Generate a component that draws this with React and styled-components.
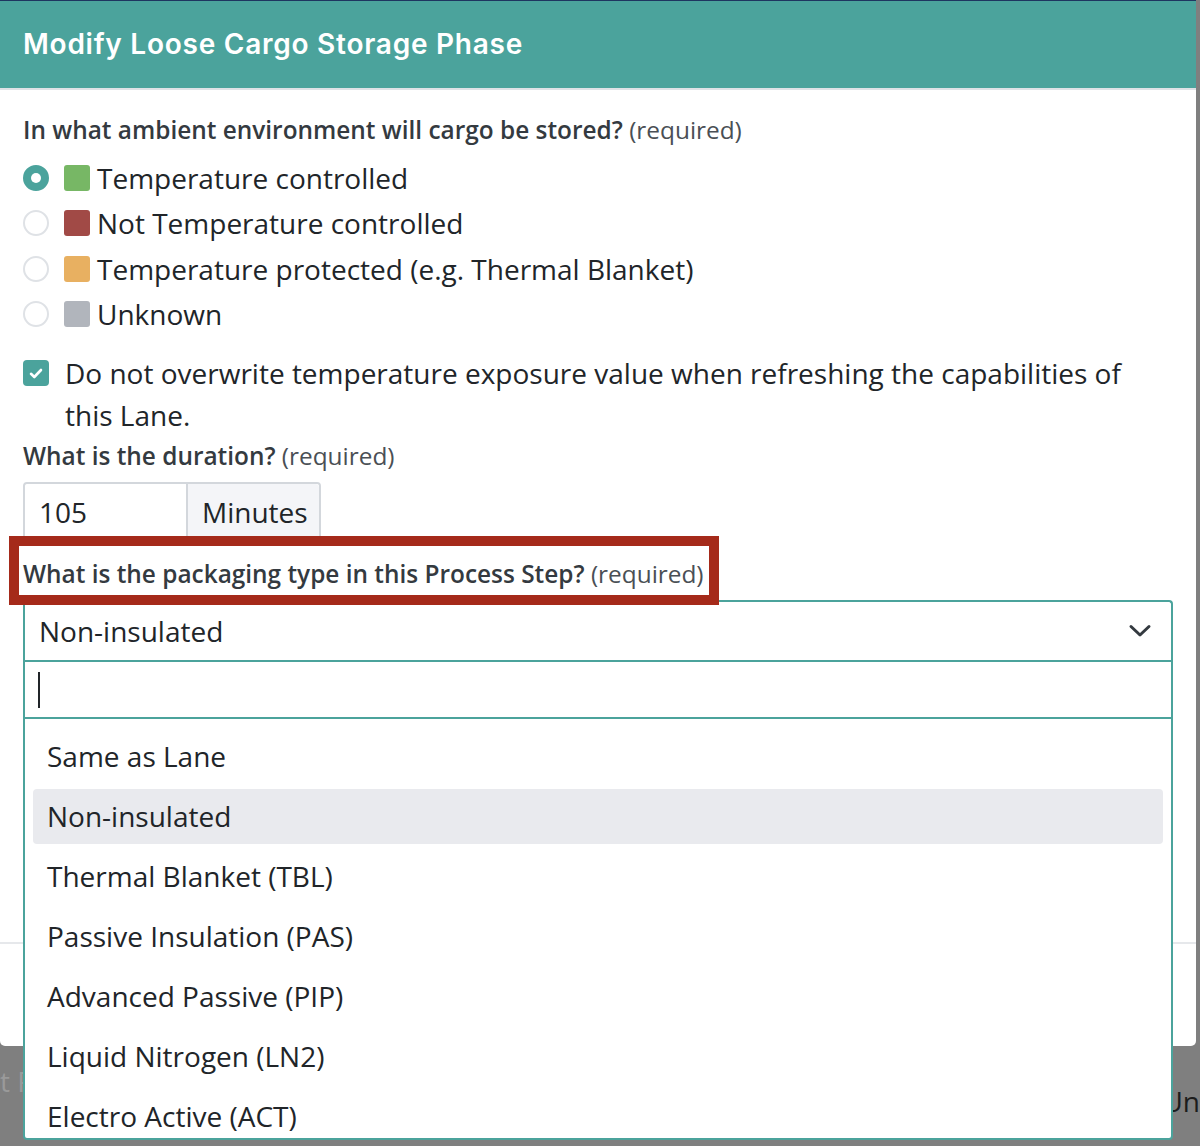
import React from 'react';
import styled, { createGlobalStyle } from 'styled-components';

const teal = '#4ba39c';

const GlobalStyle = createGlobalStyle`
  html, body {
    margin: 0;
    padding: 0;
    background: #7f7f7f;
  }
  body {
    font-family: 'Open Sans', 'Noto Sans', sans-serif;
    color: #212529;
  }
  * {
    box-sizing: border-box;
  }
`;

const StyledPage = styled.div`
  width: 1200px;
  height: 1146px;
  overflow: hidden;
  background: #7f7f7f;
`;

const StyledModal = styled.div`
  width: 1196px;
  background: #fff;
  border-top: 1px solid #1e3560;
  border-radius: 0 0 5px 5px;
`;

const StyledHeader = styled.header`
  height: 89px;
  background: ${teal};
  border-bottom: 2px solid #dee2e6;
  padding: 0 23px;
  display: flex;
  align-items: center;
`;

const StyledTitle = styled.h5`
  margin: 0 0 2px;
  font-family: 'Inter', 'Open Sans', sans-serif;
  font-weight: 600;
  font-size: 28px;
  letter-spacing: 0.75px;
  color: #fff;
`;

const StyledBody = styled.div`
  min-height: 852px;
  padding: 23px 23px 0;
`;

const StyledQuestion = styled.label`
  display: inline-block;
  position: relative;
  z-index: ${({ $flagged }) => ($flagged ? 10 : 'auto')};
  margin-top: ${({ $gap }) => $gap || 0}px;
  font-size: 24.4px;
  line-height: 33px;
  font-weight: 600;
  color: #343a40;
  span {
    font-weight: 400;
    color: #4a4f55;
  }
  &::before {
    content: '';
    display: ${({ $flagged }) => ($flagged ? 'block' : 'none')};
    position: absolute;
    top: -21px;
    left: -14px;
    right: -15px;
    bottom: -15px;
    border: 10px solid #a52a1a;
    background: #fff;
    z-index: -1;
  }
`;

const StyledRadioList = styled.div`
  margin-top: 9px;
  display: flex;
  flex-direction: column;
`;

const StyledRadioRow = styled.div`
  height: 45.5px;
  display: flex;
  align-items: center;
  font-size: 28px;
  color: #212529;
`;

const StyledRadio = styled.span`
  width: 26px;
  height: 26px;
  border-radius: 50%;
  border: 2px solid ${({ $checked }) => ($checked ? teal : '#dfe2e6')};
  background: ${({ $checked }) => ($checked ? teal : '#fff')};
  display: flex;
  align-items: center;
  justify-content: center;
  flex-shrink: 0;
  &::after {
    content: '';
    display: ${({ $checked }) => ($checked ? 'block' : 'none')};
    width: 10px;
    height: 10px;
    border-radius: 50%;
    background: #fff;
  }
`;

const StyledSwatch = styled.span`
  width: 26px;
  height: 26px;
  border-radius: 3px;
  background: ${({ $color }) => $color};
  margin: 0 7px 0 15px;
  flex-shrink: 0;
`;

const StyledCheckRow = styled.div`
  margin-top: 16px;
  display: flex;
  align-items: flex-start;
  gap: 16px;
  font-size: 28px;
  line-height: 41.5px;
  color: #212529;
`;

const StyledCheckbox = styled.span`
  width: 26px;
  height: 26px;
  margin-top: 7px;
  border-radius: 4px;
  background: ${teal};
  display: flex;
  align-items: center;
  justify-content: center;
  flex-shrink: 0;
`;

const StyledInputGroup = styled.div`
  margin-top: 10px;
  display: flex;
  width: 298px;
  height: 60px;
  border: 2px solid #d3d7dc;
  border-radius: 4px;
  font-size: 28px;
  color: #212529;
`;

const StyledInput = styled.div`
  width: 161px;
  padding-left: 14px;
  display: flex;
  align-items: center;
  background: #fff;
  border-radius: 4px 0 0 4px;
`;

const StyledAddon = styled.div`
  flex: 1;
  padding-left: 14px;
  display: flex;
  align-items: center;
  background: #f4f5f8;
  border-left: 2px solid #d3d7dc;
  border-radius: 0 4px 4px 0;
`;

const StyledSelect = styled.div`
  position: relative;
  margin-top: 10px;
  z-index: 5;
`;

const StyledControl = styled.div`
  height: 60px;
  border: 2px solid ${teal};
  border-bottom: none;
  border-radius: 4px 4px 0 0;
  padding: 0 19px 0 14px;
  display: flex;
  align-items: center;
  justify-content: space-between;
  font-size: 28px;
  color: #212529;
  background: #fff;
`;

const StyledMenu = styled.div`
  position: absolute;
  top: 100%;
  left: 0;
  right: 0;
  border: 2px solid ${teal};
  border-radius: 0 0 4px 4px;
  background: #fff;
`;

const StyledSearch = styled.div`
  height: 57px;
  border-bottom: 2px solid ${teal};
  padding-left: 13px;
  display: flex;
  align-items: center;
  &::before {
    content: '';
    width: 2px;
    height: 36px;
    background: #212529;
  }
`;

const StyledOptions = styled.ul`
  list-style: none;
  margin: 0;
  height: 419px;
  overflow: hidden;
  padding: 9.5px 8px 0;
  display: flex;
  flex-direction: column;
  gap: 5px;
`;

const StyledOption = styled.li`
  height: 55px;
  flex-shrink: 0;
  padding-left: 14px;
  display: flex;
  align-items: center;
  border-radius: 4px;
  font-size: 28px;
  color: #212529;
  background: ${({ $active }) => ($active ? '#e9eaee' : 'transparent')};
`;

const StyledFooter = styled.footer`
  height: 104px;
  border-top: 2px solid #e6e8eb;
`;

const StyledBehind = styled.div`
  height: 100px;
  display: flex;
  justify-content: space-between;
  font-size: 28px;
`;

const StyledBehindText = styled.span`
  margin-top: ${({ $top }) => $top}px;
  color: ${({ $dim }) => ($dim ? '#9a9a9a' : '#1c1c1c')};
`;

const environments = [
  { label: 'Temperature controlled', color: '#77b765', checked: true },
  { label: 'Not Temperature controlled', color: '#a14a46' },
  { label: 'Temperature protected (e.g. Thermal Blanket)', color: '#e8b061' },
  { label: 'Unknown', color: '#b1b5bc' },
];

const packagingTypes = [
  'Same as Lane',
  'Non-insulated',
  'Thermal Blanket (TBL)',
  'Passive Insulation (PAS)',
  'Advanced Passive (PIP)',
  'Liquid Nitrogen (LN2)',
  'Electro Active (ACT)',
];

const Chevron = () => (
  <svg width="24" height="14" viewBox="0 0 24 14" fill="none">
    <path d="M3 2.5 L12 11 L21 2.5" stroke="#343a40" strokeWidth="3" strokeLinecap="round" strokeLinejoin="round" />
  </svg>
);

const Check = () => (
  <svg width="14" height="11" viewBox="0 0 14 11" fill="none">
    <path d="M2 5.8 L5.3 9 L12 2" stroke="#fff" strokeWidth="2.6" strokeLinecap="round" strokeLinejoin="round" />
  </svg>
);

const App = () => {
  return (
    <StyledPage>
      <GlobalStyle />
      <StyledModal>
        <StyledHeader>
          <StyledTitle>Modify Loose Cargo Storage Phase</StyledTitle>
        </StyledHeader>
        <StyledBody>
          <StyledQuestion>
            In what ambient environment will cargo be stored? <span>(required)</span>
          </StyledQuestion>
          <StyledRadioList>
            {environments.map(({ label, color, checked }) => (
              <StyledRadioRow key={label}>
                <StyledRadio $checked={checked} />
                <StyledSwatch $color={color} />
                {label}
              </StyledRadioRow>
            ))}
          </StyledRadioList>
          <StyledCheckRow>
            <StyledCheckbox>
              <Check />
            </StyledCheckbox>
            <div>Do not overwrite temperature exposure value when refreshing the capabilities of this Lane.</div>
          </StyledCheckRow>
          <StyledQuestion $gap={3}>
            What is the duration? <span>(required)</span>
          </StyledQuestion>
          <StyledInputGroup>
            <StyledInput>105</StyledInput>
            <StyledAddon>Minutes</StyledAddon>
          </StyledInputGroup>
          <StyledQuestion $gap={15} $flagged>
            What is the packaging type in this Process Step? <span>(required)</span>
          </StyledQuestion>
          <StyledSelect>
            <StyledControl>
              Non-insulated
              <Chevron />
            </StyledControl>
            <StyledMenu>
              <StyledSearch />
              <StyledOptions>
                {packagingTypes.map((type) => (
                  <StyledOption key={type} $active={type === 'Non-insulated'}>
                    {type}
                  </StyledOption>
                ))}
              </StyledOptions>
            </StyledMenu>
          </StyledSelect>
        </StyledBody>
        <StyledFooter />
      </StyledModal>
      <StyledBehind>
        <StyledBehindText $dim $top={16}>
          t P
        </StyledBehindText>
        <StyledBehindText $top={36}>Un</StyledBehindText>
      </StyledBehind>
    </StyledPage>
  );
};

export default App;
